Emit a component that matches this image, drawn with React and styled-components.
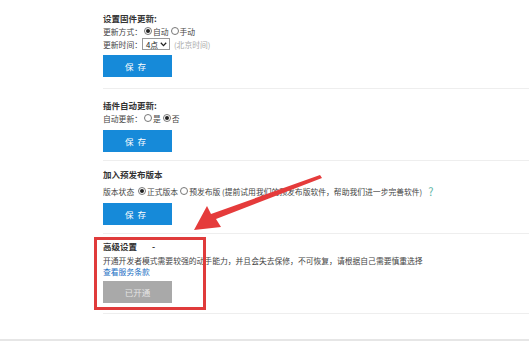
import React from 'react'
import styled, { createGlobalStyle } from 'styled-components'

const Global = createGlobalStyle`
  html, body { margin: 0; padding: 0; background: #fff; }
  body { font-family: "Noto Sans CJK SC", "Noto Sans", sans-serif; color: #333; }
`

const Page = styled.div`
  position: relative;
  width: 529px;
  height: 341px;
  overflow: hidden;
  border-bottom: 2px solid #e6e6e6;
  box-sizing: border-box;
`

const Content = styled.div`
  margin-left: 103px;
`

const Section = styled.div`
  padding: ${p => p.pad};
  border-bottom: 1px solid #eeeeee;
`

const Title = styled.div`
  font-size: 8.5px;
  font-weight: bold;
  line-height: 13px;
  color: #333;
  display: flex;
  gap: 15px;
`

const Row = styled.div`
  font-size: 7.8px;
  line-height: ${p => p.lh || '13px'};
  margin-top: ${p => p.mt || '0'};
  color: #444;
  display: flex;
  align-items: center;
  white-space: nowrap;
`

const Radio = styled.span`
  display: inline-block;
  width: 6px;
  height: 6px;
  border: 1px solid #777;
  border-radius: 50%;
  margin: 0 1px 0 2px;
  position: relative;
  &::after {
    content: '';
    display: ${p => (p.checked ? 'block' : 'none')};
    position: absolute;
    left: 1px;
    top: 1px;
    width: 4px;
    height: 4px;
    border-radius: 50%;
    background: #222;
  }
`

const Select = styled.span`
  display: inline-flex;
  align-items: center;
  justify-content: space-between;
  width: 28px;
  height: 12px;
  border: 1px solid #999;
  padding: 0 2px 0 3px;
  box-sizing: border-box;
  margin: 0 4px 0 0;
  font-size: 7.8px;
  color: #222;
`

const Hint = styled.span`
  color: #aaa;
`

const Help = styled.span`
  color: #5cb5a5;
  font-size: 11px;
  margin-left: 6px;
`

const Link = styled.span`
  color: #1a6fc4;
`

const Button = styled.div`
  width: 69px;
  height: 22px;
  margin-top: ${p => p.mt};
  background: ${p => (p.grey ? '#a9a9a9' : '#168ad9')};
  color: ${p => (p.grey ? '#e4e4e4' : '#fff')};
  font-size: 8.5px;
  letter-spacing: ${p => (p.grey ? '0' : '4px')};
  display: flex;
  align-items: center;
  justify-content: center;
`

const Highlight = styled.div`
  position: absolute;
  left: 94px;
  top: 237px;
  width: 112px;
  height: 73px;
  border: 3px solid #e03b3b;
  box-sizing: border-box;
`

const Arrow = styled.svg`
  position: absolute;
  left: 0;
  top: 0;
  pointer-events: none;
`

const Chevron = () => (
  <svg width="7" height="5" viewBox="0 0 7 5">
    <path d="M0.8 0.8 L3.5 3.6 L6.2 0.8" fill="none" stroke="#222" strokeWidth="1.3" />
  </svg>
)

export default function App() {
  return (
    <Page>
      <Global />
      <Content>
        <Section pad="11.5px 0 11px">
          <Title>设置固件更新:</Title>
          <Row>更新方式：<Radio checked />自动<Radio />手动</Row>
          <Row>更新时间：<Select>4点<Chevron /></Select><Hint>(北京时间)</Hint></Row>
          <Button mt="4.5px">保存</Button>
        </Section>
        <Section pad="9.5px 0 8px">
          <Title>插件自动更新:</Title>
          <Row>自动更新：<Radio />是<Radio checked />否</Row>
          <Button mt="5.5px">保存</Button>
        </Section>
        <Section pad="6.5px 0 8px">
          <Title>加入预发布版本</Title>
          <Row mt="4px">版本状态&nbsp;<Radio checked />正式版本<Radio />预发布版&nbsp;(提前试用我们的预发布版软件，帮助我们进一步完善软件)<Help>?</Help></Row>
          <Button mt="5.5px">保存</Button>
        </Section>
        <Section pad="5.5px 0 10px">
          <Title><span>高级设置</span><span>-</span></Title>
          <Row lh="11px" mt="2px">开通开发者模式需要较强的动手能力，并且会失去保修，不可恢复，请根据自己需要慎重选择</Row>
          <Row lh="11px"><Link>查看服务条款</Link></Row>
          <Button grey mt="4.5px">已开通</Button>
        </Section>
      </Content>
      <Highlight />
      <Arrow width="529" height="341" viewBox="0 0 529 341">
        <path d="M320 175 L322 178 L216 219 L221 227 L194 230 L207 206 L211 214 Z" fill="#e53b3b" />
      </Arrow>
    </Page>
  )
}
